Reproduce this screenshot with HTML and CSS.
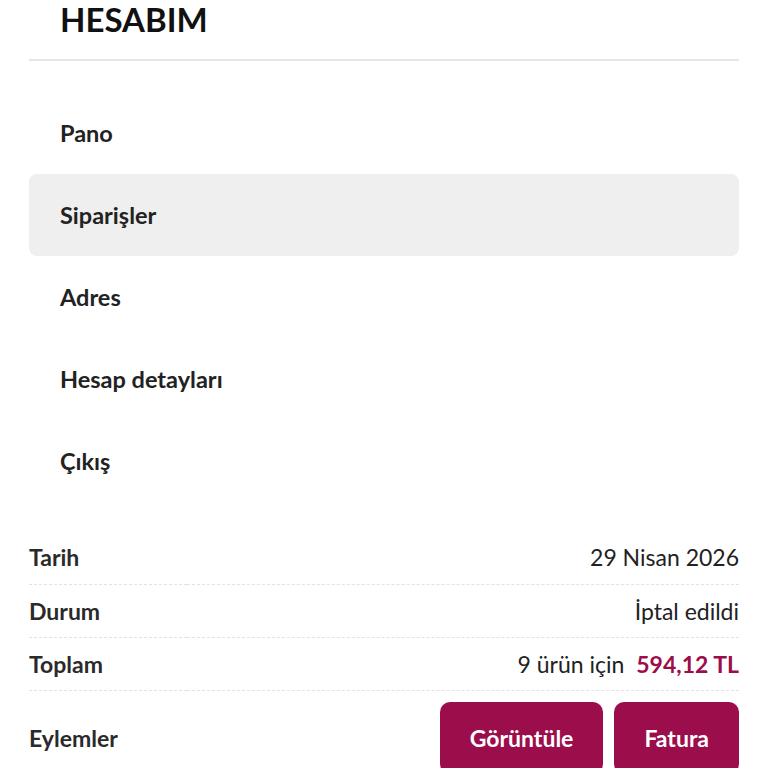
FILE: index.html
```html
<!DOCTYPE html>
<html lang="tr">

<head>
  <meta charset="UTF-8" />
  <meta name="viewport" content="width=device-width, initial-scale=1.0" />
  <title>Hesabım</title>
  <link rel="stylesheet" href="styles.css">
</head>

<body>
  <div class="page">
    <header class="account-head">
      <h1>HESABIM</h1>
    </header>

    <nav class="account-nav">
      <a href="#">Pano</a>
      <a href="#" class="active">Siparişler</a>
      <a href="#">Adres</a>
      <a href="#">Hesap detayları</a>
      <a href="#">Çıkış</a>
    </nav>

    <table class="order-table">
      <tr>
        <th>Tarih</th>
        <td>29 Nisan 2026</td>
      </tr>
      <tr>
        <th>Durum</th>
        <td>İptal edildi</td>
      </tr>
      <tr>
        <th>Toplam</th>
        <td>9 ürün için <span class="amount">594,12 TL</span></td>
      </tr>
      <tr class="actions">
        <th>Eylemler</th>
        <td>
          <a href="#" class="btn">Görüntüle</a><a href="#" class="btn">Fatura</a>
        </td>
      </tr>
    </table>
  </div>
</body>

</html>
```

FILE: styles.css
```css
* {
  margin: 0;
  padding: 0;
  box-sizing: border-box;
}

body {
  font-family: Lato, 'Noto Sans', sans-serif;
  background: #fff;
  color: #222;
}

.page {
  padding: 0 29px;
}

.account-head {
  border-bottom: 2px solid #e6e6e6;
  padding: 0 31px 21px;
}

.account-head h1 {
  font-size: 33px;
  line-height: 38px;
  font-weight: 700;
  color: #111;
}

.account-nav {
  display: flex;
  flex-direction: column;
  margin-top: 31px;
}

.account-nav a {
  display: flex;
  align-items: center;
  height: 82px;
  padding: 0 31px;
  font-size: 23.5px;
  font-weight: 700;
  color: #222;
  text-decoration: none;
  border-radius: 8px;
}

.account-nav a.active {
  background: #efefef;
}

.order-table {
  width: 100%;
  margin-top: 29px;
  border-collapse: collapse;
  font-size: 23px;
}

.order-table th,
.order-table td {
  height: 53px;
  vertical-align: middle;
  border-bottom: 1px dashed #e2e2e2;
}

.order-table th {
  text-align: left;
  font-weight: 700;
  color: #2a2a2a;
}

.order-table td {
  text-align: right;
  color: #222;
}

.amount {
  color: #9c0d4b;
  font-weight: 700;
  margin-left: 6px;
}

.actions th,
.actions td {
  border-bottom: none;
  padding-top: 11px;
  height: auto;
}

.actions td {
  white-space: nowrap;
}

.btn {
  display: inline-block;
  background: #9c0d4b;
  color: #fff;
  font-weight: 700;
  text-decoration: none;
  padding: 0 30px;
  height: 72px;
  line-height: 72px;
  border-radius: 10px;
  margin-left: 11px;
}
```
